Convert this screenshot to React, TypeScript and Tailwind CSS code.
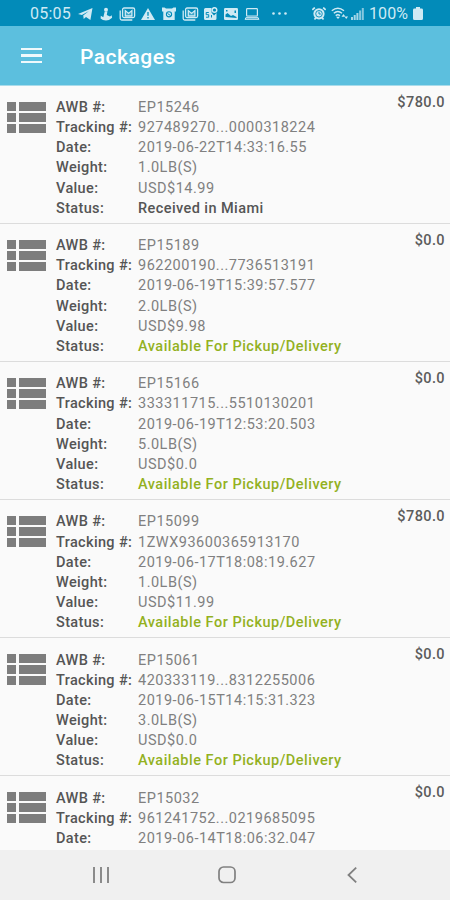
import React from 'react';

type PackageItem = {
  awb: string;
  tracking: string;
  date: string;
  weight?: string;
  value?: string;
  status?: string;
  price: string;
};

const READY = 'Available For Pickup/Delivery';

const packages: PackageItem[] = [
  { awb: 'EP15246', tracking: '927489270...0000318224', date: '2019-06-22T14:33:16.55', weight: '1.0LB(S)', value: 'USD$14.99', price: '$780.0', status: 'Received in Miami' },
  { awb: 'EP15189', tracking: '962200190...7736513191', date: '2019-06-19T15:39:57.577', weight: '2.0LB(S)', value: 'USD$9.98', price: '$0.0', status: READY },
  { awb: 'EP15166', tracking: '333311715...5510130201', date: '2019-06-19T12:53:20.503', weight: '5.0LB(S)', value: 'USD$0.0', price: '$0.0', status: READY },
  { awb: 'EP15099', tracking: '1ZWX93600365913170', date: '2019-06-17T18:08:19.627', weight: '1.0LB(S)', value: 'USD$11.99', price: '$780.0', status: READY },
  { awb: 'EP15061', tracking: '420333119...8312255006', date: '2019-06-15T14:15:31.323', weight: '3.0LB(S)', value: 'USD$0.0', price: '$0.0', status: READY },
  { awb: 'EP15032', tracking: '961241752...0219685095', date: '2019-06-14T18:06:32.047', price: '$0.0' },
];

const GalleryIcon = () => (
  <svg viewBox="0 0 17 14" className="h-[14px] w-[17px]" fill="none" stroke="currentColor" strokeWidth="1.3">
    <rect x="3.6" y="1" width="12" height="9.6" rx="1.5" />
    <path d="M1.2 3.5v8q0 1.500 1.500 1.500h10.600" />
    <path d="M6.300 9V3.600l3.300 2.800 3.300-2.800V9z" fill="currentColor" fillOpacity="0.3" />
  </svg>
);

const StatusBar = () => (
  <div className="flex h-[26px] shrink-0 items-center bg-[#028bb9] pl-[30px] pr-[27px] pt-px text-[#cfeaf4]">
    <span className="w-[48px] text-[16px] leading-[26px] tracking-[0.2px]">05:05</span>
    <svg viewBox="0 0 15 12" className="h-[12px] w-[15px]" fill="currentColor">
      <path d="M0 6 14.5 0 12.4 12 8 8.9 5.7 11 5.2 7.4 11 3 3.9 6.900z" />
    </svg>
    <svg viewBox="0 0 13 14" className="ml-[7px] h-[14px] w-[13px]" fill="currentColor">
      <circle cx="6" cy="2.800" r="2" />
      <path d="M4.700 4.500h2.700L6.800 8l3.200 1.500 1.700-1.300.4 2.600Q9.500 13.500 6 13.500T.6 11.500L.8 8.700l2.500 1.500z" />
    </svg>
    <div className="ml-[6px]">
      <GalleryIcon />
    </div>
    <svg viewBox="0 0 14 12" className="ml-[5px] h-[12px] w-[14px]">
      <path d="M7 0 14 12H0z" fill="currentColor" />
      <path d="M7 4v3.800M7 9v1.500" stroke="#028bb9" strokeWidth="1.300" />
    </svg>
    <svg viewBox="0 0 14 13" className="ml-[7px] h-[13px] w-[14px]">
      <path d="M0 .6h2.500L4 1.500h6L11.500.6H14v4h-1.300V13H1.300V4.600H0z" fill="currentColor" />
      <circle cx="7" cy="7.300" r="2.600" fill="none" stroke="#028bb9" strokeWidth="1.100" />
      <path d="M5.500 6.400 7 7.500l1.500 1" stroke="#028bb9" strokeWidth="1" fill="none" />
    </svg>
    <div className="ml-[6px]">
      <GalleryIcon />
    </div>
    <svg viewBox="0 0 14 13" className="ml-[5px] h-[13px] w-[14px]">
      <path d="M1.500 1h6v4.500L10 8.500 12.500 6v5.500q0 1.500-1.500 1.500H1.500Q0 13 0 11.500v-9Q0 1 1.500 1z" fill="currentColor" />
      <circle cx="10.500" cy="3" r="2.300" fill="none" stroke="currentColor" strokeWidth="1.500" />
      <path d="M4.800 5.500H2.200v2.200h2.500v2.500H2M7.500 10.500V8" fill="none" stroke="#028bb9" strokeWidth="1" />
    </svg>
    <svg viewBox="0 0 14 12" className="ml-[6px] h-[12px] w-[14px]">
      <rect width="14" height="12" rx="1.300" fill="currentColor" />
      <path d="M1.500 9V6.500l2-1.500 3.500 3 2-1 3.500 2v1zM2 2h1.500v1.500H2zM10.500 2.500H12V5h-1.500z" fill="#028bb9" />
    </svg>
    <svg viewBox="0 0 16 12" className="ml-[6px] h-[12px] w-[16px]" fill="none" stroke="currentColor">
      <rect x="2.600" y=".6" width="10.800" height="7.400" rx=".8" strokeWidth="1.200" />
      <path d="M2.200 9.300h11.600L15 11.300H1z" strokeWidth="1" fill="currentColor" fillOpacity="0.4" />
    </svg>
    <svg viewBox="0 0 15 3" className="ml-[12px] h-[3px] w-[15px]" fill="currentColor">
      <circle cx="1.500" cy="1.500" r="1.300" />
      <circle cx="7.500" cy="1.500" r="1.300" />
      <circle cx="13.500" cy="1.500" r="1.300" />
    </svg>
    <svg viewBox="0 0 14 13" className="ml-auto h-[13px] w-[14px]">
      <path d="M.3 2.800 2.800.5M13.700 2.800 11.200.5M2.500 12.500l1.500-2m7.500 2-1.500-2" stroke="currentColor" strokeWidth="1.700" />
      <circle cx="7" cy="6.800" r="5.600" fill="currentColor" />
      <circle cx="7" cy="6.800" r="3.300" fill="none" stroke="#028bb9" strokeWidth="0.900" />
      <path d="M7 4.700V7h1.800" fill="none" stroke="#028bb9" strokeWidth="1" />
    </svg>
    <svg viewBox="0 0 18 13" className="ml-[5px] h-[13px] w-[18px]" fill="none" stroke="currentColor" strokeWidth="1.400">
      <path d="M.8 3.800q6-5.200 12.200 0M2.800 6.300q4-3.500 8.200 0M4.700 8.600q2-1.700 4.300 0" />
      <path d="m7 12-2-2.200h4z" fill="currentColor" stroke="none" />
      <path d="m12.500 7-2 2.800h4zM15.200 12l-1.700-2.500h3.600z" fill="currentColor" stroke="none" />
    </svg>
    <svg viewBox="0 0 13 12" className="ml-[2px] h-[12px] w-[13px]" fill="currentColor">
      <path d="M0 9h2v3H0zM2.700 7h2v5h-2zM5.400 5h2v7h-2z" opacity=".8" />
      <path d="M8.100 2.500h2V12h-2zM10.800 0h2v12h-2z" opacity=".65" />
    </svg>
    <span className="ml-[5px] w-[40px] whitespace-nowrap text-[16px] leading-[26px] tracking-[0.1px]">100%</span>
    <svg viewBox="0 0 10 13" className="ml-[4px] h-[13px] w-[10px]" fill="currentColor">
      <path d="M3 0h4v1.600h1.500Q10 1.600 10 3v8.500q0 1.500-1.500 1.500h-7Q0 13 0 11.500V3q0-1.400 1.500-1.400H3z" />
    </svg>
  </div>
);

const AppBar = () => (
  <header className="flex h-[60px] shrink-0 items-center border-b border-[#a9dbea] bg-[#5cbfde] pl-[21px]">
    <button aria-label="Menu" className="flex w-[21px] flex-col gap-[4px]">
      <span className="h-[2.500px] bg-white/90" />
      <span className="h-[2.500px] bg-white/90" />
      <span className="h-[2.500px] bg-white/90" />
    </button>
    <h1 className="ml-[38px] pt-[3px] text-[21px] font-medium leading-7 tracking-[0.500px] text-white">Packages</h1>
  </header>
);

const ListIcon = () => (
  <div className="grid h-[31px] w-[39px] shrink-0 grid-cols-[9px_27px] grid-rows-3 gap-x-[3px] gap-y-[2px]">
    {[0, 1, 2, 3, 4, 5].map((n) => (
      <span key={n} className="bg-[#7d7d7d]" />
    ))}
  </div>
);

const Row = ({ label, children }: { label: string; children: React.ReactNode }) => (
  <div className="flex h-[20.100px] items-center whitespace-nowrap">
    <dt className="w-[82px] font-medium tracking-[0.350px] text-[#555555]">{label}</dt>
    <dd className="tracking-[0.500px] text-[#808080]">{children}</dd>
  </div>
);

const PackageCard = ({ item }: { item: PackageItem }) => (
  <li className="flex h-[138.100px] shrink-0 border-b border-[#dcdcdc] pl-[7px] pr-[5px]">
    <div className="pt-[16px]">
      <ListIcon />
    </div>
    <dl className="ml-[10px] flex-1 pt-[12px] text-[14.500px]">
      <Row label="AWB #:">{item.awb}</Row>
      <Row label="Tracking #:">{item.tracking}</Row>
      <Row label="Date:">{item.date}</Row>
      {item.weight && <Row label="Weight:">{item.weight}</Row>}
      {item.value && <Row label="Value:">{item.value}</Row>}
      {item.status && (
        <Row label="Status:">
          {item.status === READY ? (
            <span className="font-medium text-[#93b11f]">{item.status}</span>
          ) : (
            <span className="font-medium tracking-[0.420px] text-[#555555]">{item.status}</span>
          )}
        </Row>
      )}
    </dl>
    <span className="pt-[7px] text-[14.500px] font-medium leading-5 tracking-[0.400px] text-[#5c5c5c]">{item.price}</span>
  </li>
);

const NavBar = () => (
  <nav className="flex h-[50px] shrink-0 items-center bg-[#f0f0f0] pl-[93px] text-[#808080]">
    <svg viewBox="0 0 16 16" className="h-4 w-4" stroke="currentColor" strokeWidth="1.800">
      <path d="M1 0v16M8 0v16M15 0v16" />
    </svg>
    <svg viewBox="0 0 18 18" className="ml-[109px] h-[18px] w-[18px]" fill="none" stroke="currentColor" strokeWidth="1.700">
      <rect x="1" y="1" width="16" height="15.500" rx="4.500" />
    </svg>
    <svg viewBox="0 0 10 16" className="ml-[111px] h-4 w-[10px]" fill="none" stroke="currentColor" strokeWidth="1.800">
      <path d="M9.200.7 1.500 8l7.700 7.300" />
    </svg>
  </nav>
);

export default function App() {
  return (
    <div className="flex h-screen w-full flex-col overflow-hidden bg-[#fafafa] font-['Roboto',sans-serif]">
      <StatusBar />
      <AppBar />
      <ul className="flex min-h-0 flex-1 flex-col overflow-hidden">
        {packages.map((item) => (
          <PackageCard key={item.awb} item={item} />
        ))}
      </ul>
      <NavBar />
    </div>
  );
}
